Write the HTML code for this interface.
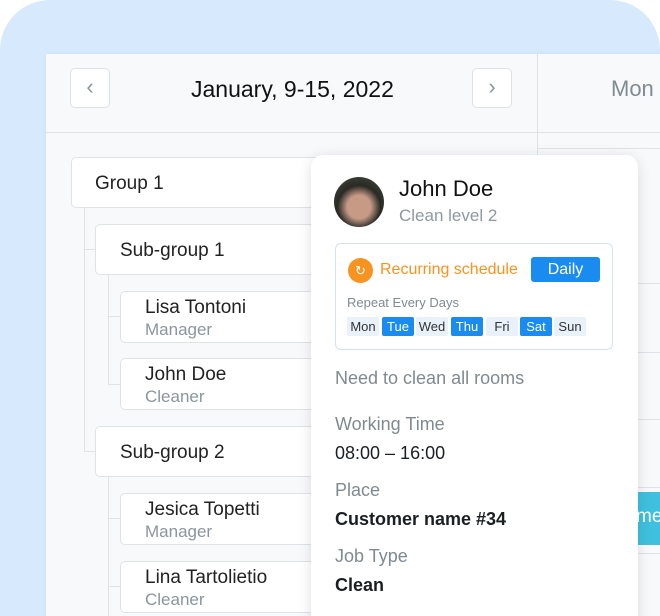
<!DOCTYPE html>
<html><head><style>
*{margin:0;padding:0;box-sizing:border-box}
html,body{width:660px;height:616px;overflow:hidden}
body{background:#fff;font-family:"Liberation Sans",sans-serif;position:relative}
.bg{position:absolute;left:0;top:0;width:660px;height:616px;background:#d7eafd;border-radius:50px 50px 0 0}
.card{position:absolute;left:46px;top:54px;width:614px;height:562px;background:#f8f9fb;box-shadow:0 0 6px rgba(0,0,0,.05)}
.abs{position:absolute}
.nav{position:absolute;top:68px;width:40px;height:40px;border:1px solid #dde2e8;border-radius:5px;background:#fff;color:#8a949e;font-size:22px;text-align:center;line-height:36px}
.box{position:absolute;background:#fff;border:1px solid #dfe3e8;border-radius:5px;width:260px}
.t{font-size:19px;color:#222}
.s{font-size:17px;color:#8a969e}
.vl{position:absolute;width:1px;background:#dfe3e8}
.hl{position:absolute;height:1px;background:#dfe3e8}
.day{position:absolute;top:317px;height:19px;width:32px;background:#e9f1fb;border-radius:2px;font-size:13px;text-align:center;line-height:19px;color:#333}
.on{background:#1a8cf0;color:#fff}
</style></head><body>
<div class="bg"></div>
<div class="card"></div>
<div class="hl" style="left:46px;top:132px;width:491px"></div>
<div class="vl" style="left:537px;top:54px;height:562px"></div>
<div class="hl" style="left:537px;top:132px;width:123px"></div>
<div class="hl" style="left:537px;top:148px;width:123px"></div>
<div class="nav" style="left:70px">‹</div>
<div class="nav" style="left:472px">›</div>
<div class="abs" style="left:191px;top:76px;font-size:23px;color:#111">January, 9-15, 2022</div>
<div class="abs" style="left:611px;top:76px;font-size:22px;color:#7f8c93">Mon</div>
<div class="hl" style="left:620px;top:283px;width:40px"></div>
<div class="hl" style="left:620px;top:352px;width:40px"></div>
<div class="hl" style="left:620px;top:419px;width:40px"></div>
<div class="hl" style="left:620px;top:487px;width:40px"></div>
<div class="hl" style="left:620px;top:553px;width:40px"></div>
<div class="abs" style="left:630px;top:492px;width:40px;height:53px;background:#3fc0de;color:#fff;font-size:19px;line-height:50px;padding-left:6px">me</div>

<div class="vl" style="left:84px;top:207px;height:245px"></div>
<div class="hl" style="left:84px;top:249px;width:11px"></div>
<div class="hl" style="left:84px;top:451px;width:11px"></div>
<div class="vl" style="left:108px;top:274px;height:111px"></div>
<div class="hl" style="left:108px;top:316px;width:12px"></div>
<div class="hl" style="left:108px;top:384px;width:12px"></div>
<div class="vl" style="left:108px;top:477px;height:139px"></div>
<div class="hl" style="left:108px;top:518px;width:12px"></div>
<div class="hl" style="left:108px;top:586px;width:12px"></div>

<div class="box" style="left:71px;top:157px;height:51px"><div class="t" style="position:absolute;left:23px;top:15px">Group 1</div></div>
<div class="box" style="left:95px;top:224px;height:51px"><div class="t" style="position:absolute;left:24px;top:15px">Sub-group 1</div></div>
<div class="box" style="left:120px;top:291px;height:52px"><div class="t" style="position:absolute;left:24px;top:5px">Lisa Tontoni</div><div class="s" style="position:absolute;left:24px;top:28px">Manager</div></div>
<div class="box" style="left:120px;top:358px;height:52px"><div class="t" style="position:absolute;left:24px;top:5px">John Doe</div><div class="s" style="position:absolute;left:24px;top:28px">Cleaner</div></div>
<div class="box" style="left:95px;top:426px;height:51px"><div class="t" style="position:absolute;left:24px;top:15px">Sub-group 2</div></div>
<div class="box" style="left:120px;top:493px;height:52px"><div class="t" style="position:absolute;left:24px;top:5px">Jesica Topetti</div><div class="s" style="position:absolute;left:24px;top:28px">Manager</div></div>
<div class="box" style="left:120px;top:561px;height:52px"><div class="t" style="position:absolute;left:24px;top:5px">Lina Tartolietio</div><div class="s" style="position:absolute;left:24px;top:28px">Cleaner</div></div>

<div class="abs" style="left:311px;top:155px;width:327px;height:480px;background:#fff;border-radius:12px;box-shadow:0 2px 14px rgba(0,0,0,.12)"></div>
<div class="abs" style="left:334px;top:177px;width:50px;height:50px;border-radius:50%;background:radial-gradient(circle at 50% 60%,#c79a86 0 30%,#2a2a25 55%,#47503e 100%)"></div>
<div class="abs" style="left:399px;top:176px;font-size:22px;color:#111">John Doe</div>
<div class="abs" style="left:399px;top:206px;font-size:17px;color:#8d99a2">Clean level 2</div>
<div class="abs" style="left:335px;top:243px;width:278px;height:107px;border:1.5px solid #d6e2ee;border-radius:6px"></div>
<div class="abs" style="left:348px;top:258px;width:25px;height:25px;border-radius:50%;background:#f7931e;color:#fff;font-size:13px;text-align:center;line-height:25px">↻</div>
<div class="abs" style="left:380px;top:261px;font-size:16px;color:#f7931e">Recurring schedule</div>
<div class="abs" style="left:531px;top:257px;width:69px;height:25px;background:#1a8cf0;border-radius:3px;color:#fff;font-size:16px;text-align:center;line-height:25px">Daily</div>
<div class="abs" style="left:347px;top:295px;font-size:13px;color:#7f8a93">Repeat Every Days</div>
<div class="day" style="left:347px">Mon</div>
<div class="day on" style="left:382px">Tue</div>
<div class="day" style="left:416px">Wed</div>
<div class="day on" style="left:451px">Thu</div>
<div class="day" style="left:486px">Fri</div>
<div class="day on" style="left:520px">Sat</div>
<div class="day" style="left:554px">Sun</div>
<div class="abs" style="left:335px;top:368px;font-size:18px;color:#7f8a90">Need to clean all rooms</div>
<div class="abs" style="left:335px;top:414px;font-size:18px;color:#7f8a90">Working Time</div>
<div class="abs" style="left:335px;top:443px;font-size:18px;color:#1b1f24">08:00 – 16:00</div>
<div class="abs" style="left:335px;top:480px;font-size:18px;color:#7f8a90">Place</div>
<div class="abs" style="left:335px;top:509px;font-size:18px;font-weight:bold;color:#1b1f24">Customer name #34</div>
<div class="abs" style="left:335px;top:546px;font-size:18px;color:#7f8a90">Job Type</div>
<div class="abs" style="left:335px;top:575px;font-size:18px;font-weight:bold;color:#1b1f24">Clean</div>
</body></html>
